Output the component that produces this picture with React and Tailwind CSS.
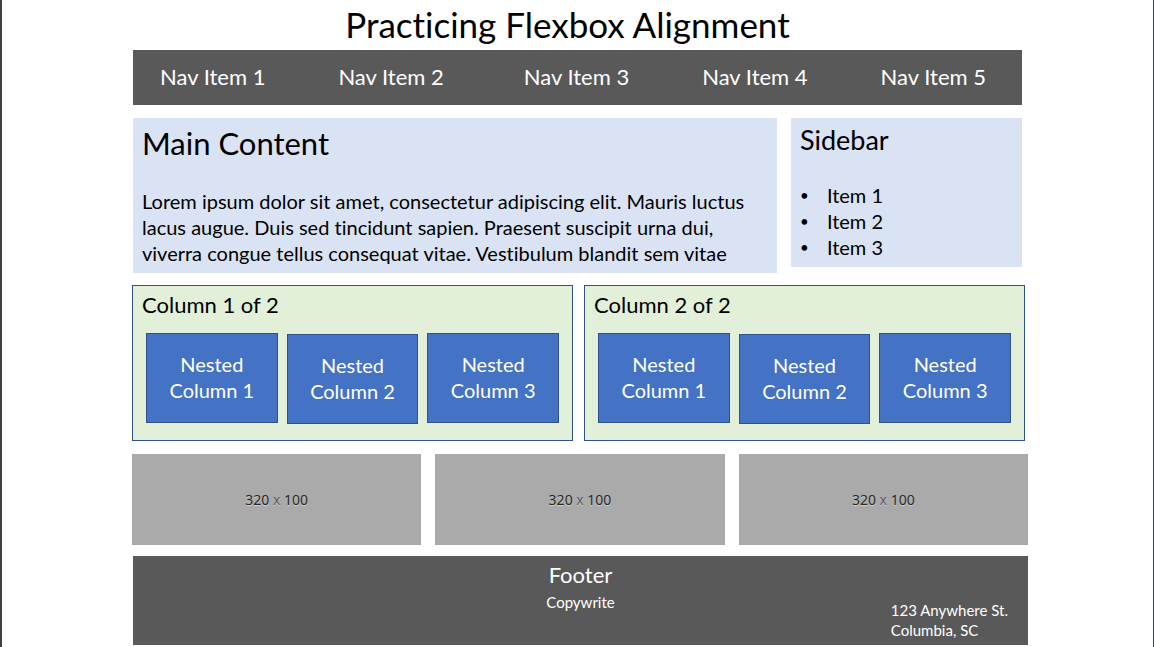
const navGroups = [
  ["Nav Item 1", "Nav Item 2"],
  ["Nav Item 3", "Nav Item 4", "Nav Item 5"],
];

const sidebarItems = ["Item 1", "Item 2", "Item 3"];

function NavBar() {
  return (
    <nav className="mr-[6px] ml-px flex h-[55px] items-center justify-between bg-[#595959] pr-[36px] pb-[2px] pl-[27px] text-[22px] text-white">
      {navGroups.map((group) => (
        <ul key={group[0]} className="flex gap-[73px]">
          {group.map((label) => (
            <li key={label}>
              <a href="#" className="whitespace-nowrap">
                {label}
              </a>
            </li>
          ))}
        </ul>
      ))}
    </nav>
  );
}

function NestedColumns({ title }) {
  return (
    <section className="h-[156px] flex-1 border border-[#2f528f] bg-[#e2f0d9] px-[13px]">
      <h2 className="-ml-1 pt-1 text-[22px] leading-[30px]">{title}</h2>
      <div className="mt-[13px] grid grid-cols-3 gap-[9px] text-center text-[20px] leading-[26px] text-white">
        {[1, 2, 3].map((n) => (
          <div
            key={n}
            className="flex h-[90px] items-center justify-center border border-[#2f528f] bg-[#4472c4] pb-[2px] even:mt-px"
          >
            <p>
              Nested
              <br />
              Column {n}
            </p>
          </div>
        ))}
      </div>
    </section>
  );
}

function Placeholder() {
  return (
    <div className="flex h-[91px] flex-1 items-center justify-center bg-[#aaaaaa] font-['Noto_Sans',sans-serif] text-[14px] text-[#262626] [text-shadow:0_1px_0_#d0d0d0]">
      <p>
        320 <span className="text-[#5c5c5c]">x</span> 100
      </p>
    </div>
  );
}

export default function App() {
  return (
    <div className="min-h-screen border-r border-l-2 border-[#3b4045] bg-white pr-[125px] pl-[130px] font-['Lato',sans-serif] text-black [font-variant-ligatures:none]">
      <h1 className="pr-[25px] pb-[2px] text-center text-[35px] leading-[48px]">Practicing Flexbox Alignment</h1>
      <NavBar />
      <div className="mt-[13px] mr-[6px] ml-px flex items-start gap-[14px]">
        <main className="h-[155px] flex-1 bg-[#dae3f3] px-[9px]">
          <h2 className="pt-[5px] text-[31px] leading-[40px]">Main Content</h2>
          <p className="mt-[25px] text-[20px] leading-[26px]">
            Lorem ipsum dolor sit amet, consectetur adipiscing elit. Mauris luctus
            <br />
            lacus augue. Duis sed tincidunt sapien. Praesent suscipit urna dui,
            <br />
            viverra congue tellus consequat vitae. Vestibulum blandit sem vitae
          </p>
        </main>
        <aside className="h-[149px] w-[26%] bg-[#dae3f3] px-[9px]">
          <h2 className="pt-[5px] text-[27px] leading-[33px]">Sidebar</h2>
          <ul className="mt-[26px] text-[20px] leading-[26px]">
            {sidebarItems.map((item) => (
              <li key={item} className="flex">
                <span className="w-[27px] text-[15px]">•</span>
                {item}
              </li>
            ))}
          </ul>
        </aside>
      </div>
      <div className="mt-[12px] mr-[3px] flex gap-[11px]">
        <NestedColumns title="Column 1 of 2" />
        <NestedColumns title="Column 2 of 2" />
      </div>
      <div className="mt-[13px] flex gap-[14px]">
        <Placeholder />
        <Placeholder />
        <Placeholder />
      </div>
      <footer className="mt-[11px] ml-px grid h-[89px] grid-cols-[1fr_auto_1fr] bg-[#595959] text-white">
        <div className="col-start-2 pt-[4px] text-center">
          <p className="text-[22px] leading-[30px]">Footer</p>
          <p className="text-[15px] leading-[24px]">Copywrite</p>
        </div>
        <address className="mr-[20px] self-end justify-self-end pb-[5px] text-[15px] leading-[20px] not-italic">
          123 Anywhere St.
          <br />
          Columbia, SC
        </address>
      </footer>
    </div>
  );
}
